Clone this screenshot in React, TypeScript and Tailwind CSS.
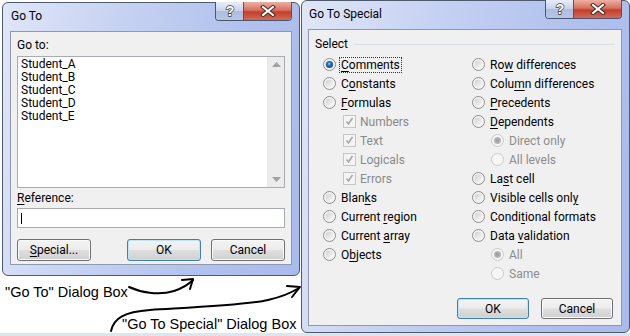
import React from 'react';

// Win7-style "Go To" / "Go To Special" dialogs with annotation arrows

type Parts = [string] | [string, string, string];

const Label = ({ parts }: { parts: Parts }) =>
  parts.length === 3 ? (
    <>
      {parts[0]}
      <u className="underline-offset-[2px]">{parts[1]}</u>
      {parts[2]}
    </>
  ) : (
    <>{parts[0]}</>
  );

const Radio = ({ checked = false, disabled = false }: { checked?: boolean; disabled?: boolean }) => (
  <svg width="13" height="13" viewBox="0 0 13 13" className="shrink-0">
    <defs>
      <radialGradient id="rbOn" cx="45%" cy="40%" r="60%">
        <stop offset="0%" stopColor="#b6e3fb" />
        <stop offset="35%" stopColor="#2b74bd" />
        <stop offset="100%" stopColor="#1a4f8e" />
      </radialGradient>
      <linearGradient id="rbIn" x1="0" y1="0" x2="1" y2="1">
        <stop offset="0%" stopColor="#cfcfcf" />
        <stop offset="100%" stopColor="#fbfbfb" />
      </linearGradient>
    </defs>
    <circle cx="6.5" cy="6.5" r="6" fill="#f6f6f6" stroke={disabled ? '#c9c9c9' : '#8d8d8d'} />
    {!disabled && <circle cx="6.5" cy="6.5" r="4" fill="url(#rbIn)" />}
    {checked && !disabled && <circle cx="6.5" cy="6.5" r="3.6" fill="url(#rbOn)" />}
    {checked && disabled && (
      <>
        <circle cx="6.5" cy="6.5" r="3.6" fill="#b9b9b9" />
        <circle cx="6.5" cy="6.5" r="2" fill="#a2a2a2" />
      </>
    )}
  </svg>
);

const Check = () => (
  <svg width="13" height="13" viewBox="0 0 13 13" className="shrink-0">
    <rect x="0.5" y="0.5" width="12" height="12" fill="#f4f4f4" stroke="#c6c6c6" />
    <path d="M3.5 6.5 L5.5 9 L9.5 3" fill="none" stroke="#a8a8a8" strokeWidth="1.6" />
  </svg>
);

const CaptionButtons = () => (
  <div className="-mt-[1px] flex h-[19px] overflow-hidden rounded-b-[4px] border border-t-0 border-[#4b566c]">
    <div className="flex w-[28px] items-center justify-center border-r border-[#4b566c] bg-[linear-gradient(180deg,#e8edf8_0%,#c7d2ea_50%,#aebcdf_51%,#b8c6e6_100%)]">
      <svg width="14" height="16" viewBox="0 0 14 16">
        <text
          x="7"
          y="13"
          textAnchor="middle"
          fontFamily="Liberation Sans, sans-serif"
          fontWeight="bold"
          fontSize="14"
          fill="#ffffff"
          stroke="#3a3f4a"
          strokeWidth="1.4"
          paintOrder="stroke"
        >
          ?
        </text>
      </svg>
    </div>
    <div className="flex w-[47px] items-center justify-center bg-[linear-gradient(180deg,#ecb0a3_0%,#d9715f_45%,#c23e2b_55%,#d46a55_100%)]">
      <svg width="16" height="12" viewBox="0 0 16 12">
        <path d="M3 2 L13 10 M13 2 L3 10" stroke="#3a2a28" strokeWidth="4" strokeLinecap="square" />
        <path d="M3 2 L13 10 M13 2 L3 10" stroke="#ffffff" strokeWidth="2" strokeLinecap="square" />
      </svg>
    </div>
  </div>
);

const Btn = ({ children, primary = false, w, h }: { children: React.ReactNode; primary?: boolean; w: string; h: string }) => (
  <div
    className={`flex ${w} ${h} items-center justify-center rounded-[3px] border bg-[linear-gradient(180deg,#f3f3f3_0%,#ececec_48%,#dedede_52%,#d0d0d0_100%)] text-[12px] text-black ${
      primary ? 'border-[#3c7fb1] shadow-[inset_0_0_0_1px_#bfe3f7]' : 'border-[#707070] shadow-[inset_0_0_0_1px_#fbfbfb]'
    }`}
  >
    {children}
  </div>
);

type Item = { parts: Parts; kind: 'radio' | 'check' | 'sub'; checked?: boolean; focus?: boolean };

const leftItems: Item[] = [
  { parts: ['', 'C', 'omments'], kind: 'radio', checked: true, focus: true },
  { parts: ['C', 'o', 'nstants'], kind: 'radio' },
  { parts: ['', 'F', 'ormulas'], kind: 'radio' },
  { parts: ['Numbers'], kind: 'check' },
  { parts: ['Text'], kind: 'check' },
  { parts: ['Logicals'], kind: 'check' },
  { parts: ['Errors'], kind: 'check' },
  { parts: ['Blan', 'k', 's'], kind: 'radio' },
  { parts: ['Current ', 'r', 'egion'], kind: 'radio' },
  { parts: ['Current ', 'a', 'rray'], kind: 'radio' },
  { parts: ['O', 'b', 'jects'], kind: 'radio' },
];

const rightItems: Item[] = [
  { parts: ['Ro', 'w', ' differences'], kind: 'radio' },
  { parts: ['Colu', 'm', 'n differences'], kind: 'radio' },
  { parts: ['', 'P', 'recedents'], kind: 'radio' },
  { parts: ['', 'D', 'ependents'], kind: 'radio' },
  { parts: ['Direct only'], kind: 'sub', checked: true },
  { parts: ['All levels'], kind: 'sub' },
  { parts: ['La', 's', 't cell'], kind: 'radio' },
  { parts: ['Visible cells onl', 'y', ''], kind: 'radio' },
  { parts: ['Condi', 't', 'ional formats'], kind: 'radio' },
  { parts: ['Data ', 'v', 'alidation'], kind: 'radio' },
  { parts: ['All'], kind: 'sub', checked: true },
  { parts: ['Same'], kind: 'sub' },
];

const Row = ({ item }: { item: Item }) => {
  if (item.kind === 'check') {
    return (
      <div className="flex h-[19px] items-center pl-[20px]">
        <Check />
        <span className="ml-[4px] text-[#8a8a8a]">
          <Label parts={item.parts} />
        </span>
      </div>
    );
  }
  const sub = item.kind === 'sub';
  return (
    <div className={`flex h-[19px] items-center ${sub ? 'pl-[19px]' : ''}`}>
      <Radio checked={item.checked} disabled={sub} />
      <span
        className={`ml-[3px] border px-[1px] leading-[14px] ${
          item.focus ? 'border-dotted border-[#333]' : 'border-transparent'
        } ${sub ? 'text-[#8d8d8d]' : 'text-black'}`}
      >
        <Label parts={item.parts} />
      </span>
    </div>
  );
};

const frameBg =
  'bg-[linear-gradient(100deg,#dfe6f7_0%,#c6d2f2_35%,#b2c2ee_70%,#a9baec_100%)]';

export default function App() {
  return (
    <div className="relative flex h-[336px] w-[630px] overflow-hidden bg-white font-['Roboto',sans-serif] text-[12px] text-black">
      {/* Left column: Go To dialog + captions */}
      <div className="flex w-[301px] shrink-0 flex-col">
        <div className={`ml-[2px] mt-[2px] flex h-[274px] w-[298px] flex-col rounded-[6px] border border-[#505a6e] ${frameBg} px-[7px] pb-[10px]`}>
          <div className="flex h-[28px] items-start justify-between">
            <span className="mt-[6px] pl-[1px] leading-[15px]">Go To</span>
            <CaptionButtons />
          </div>
          <div className="flex flex-1 flex-col border border-[#8d99b0] bg-[#f0f0f0] px-[6px]">
            <div className="mt-[6px] leading-[15px]">Go to:</div>
            <div className="mt-[3px] flex h-[132px] border border-[#a9abb2] bg-white">
              <div className="flex-1 pl-[3px] pt-[1px] leading-[13px]">
                <div>Student_A</div>
                <div>Student_B</div>
                <div>Student_C</div>
                <div>Student_D</div>
                <div>Student_E</div>
              </div>
              <div className="flex w-[17px] flex-col items-center justify-between border-l border-[#e6e6e6] bg-[#ececec] py-[5px]">
                <svg width="9" height="5" viewBox="0 0 9 5">
                  <path d="M0 5 L4.5 0 L9 5 Z" fill="#a0a0a0" />
                </svg>
                <svg width="9" height="5" viewBox="0 0 9 5">
                  <path d="M0 0 L4.5 5 L9 0 Z" fill="#a0a0a0" />
                </svg>
              </div>
            </div>
            <div className="mt-[3px] leading-[15px]">
              <u className="underline-offset-[2px]">R</u>eference:
            </div>
            <div className="mt-[2px] flex h-[20px] items-center border border-[#a9abb2] bg-white pl-[3px]">
              <div className="h-[11px] w-[1px] bg-black" />
            </div>
            <div className="mt-[11px] flex items-center justify-between">
              <Btn w="w-[74px]" h="h-[22px]">
                <span>
                  <u className="underline-offset-[2px]">S</u>pecial...
                </span>
              </Btn>
              <div className="flex gap-[10px]">
                <Btn w="w-[74px]" h="h-[22px]" primary>
                  OK
                </Btn>
                <Btn w="w-[74px]" h="h-[22px]">
                  Cancel
                </Btn>
              </div>
            </div>
          </div>
        </div>
        <div className="flex flex-1 flex-col font-['Liberation_Sans',Arial,sans-serif] text-[14.5px] leading-[16px]">
          <div className="ml-[5px] mt-[8px]">"Go To" Dialog Box</div>
          <div className="ml-[122px] mt-[16px]">"Go To Special" Dialog Box</div>
        </div>
        <div className="h-[3px] bg-[#dfe5ee]" />
      </div>

      {/* Right: Go To Special dialog */}
      <div className="flex flex-1 flex-col">
        <div className={`flex h-[333px] flex-col rounded-[6px] border border-[#505a6e] ${frameBg} pl-[6px] pr-[7px] pb-[6px]`}>
          <div className="flex h-[28px] items-start justify-between">
            <span className="mt-[6px] pl-[1px] leading-[15px]">Go To Special</span>
            <CaptionButtons />
          </div>
          <div className="flex flex-1 flex-col border border-[#8d99b0] bg-[#f0f0f0]">
            <div className="mt-[7px] flex items-center pl-[6px] pr-[6px] leading-[15px]">
              <span>Select</span>
              <div className="ml-[6px] h-[1px] flex-1 bg-[#d5dfe8]" />
            </div>
            <div className="mt-[3px] flex pl-[14px]">
              <div className="flex w-[149px] flex-col">
                {leftItems.map((it, i) => (
                  <Row key={i} item={it} />
                ))}
              </div>
              <div className="flex flex-col">
                {rightItems.map((it, i) => (
                  <Row key={i} item={it} />
                ))}
              </div>
            </div>
            <div className="mt-[15px] flex justify-end gap-[12px] pr-[8px]">
              <Btn w="w-[72px]" h="h-[21px]" primary>
                OK
              </Btn>
              <Btn w="w-[72px]" h="h-[21px]">
                Cancel
              </Btn>
            </div>
          </div>
        </div>
        <div className="flex-1 bg-[#dfe5ee]" />
      </div>

      {/* Annotation arrows */}
      <svg className="pointer-events-none absolute left-0 top-0" width="630" height="336" viewBox="0 0 630 336">
        <g fill="none" stroke="#000" strokeWidth="2" strokeLinecap="round" strokeLinejoin="round">
          <path d="M129 287 C 140 292, 158 296, 174 291 C 183 288, 189 284, 193 280" />
          <path d="M182 280 L193 279 L190 289" />
          <path d="M111 331 C 114 318, 124 312, 150 310 C 200 307, 248 305, 268 300 C 281 297, 291 293, 299 288" />
          <path d="M287 286 L300 287 L292 297" />
        </g>
      </svg>
    </div>
  );
}
